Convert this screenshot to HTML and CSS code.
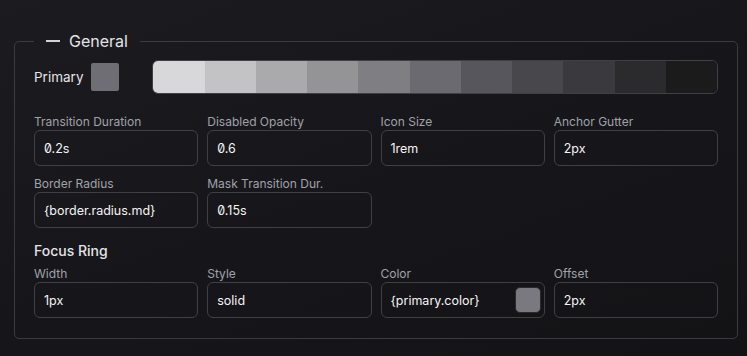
FILE: index.html
```html
<!DOCTYPE html>
<html lang="en">
<head>
<meta charset="utf-8">
<title>General</title>
<link rel="stylesheet" href="styles.css">
</head>
<body>
<fieldset class="panel">
  <legend class="legend"><span class="dash"></span><span>General</span></legend>

  <div class="primary-row">
    <span class="primary-label">Primary</span>
    <span class="primary-swatch"></span>
    <div class="palette">
      <span class="shade s50"></span>
      <span class="shade s100"></span>
      <span class="shade s200"></span>
      <span class="shade s300"></span>
      <span class="shade s400"></span>
      <span class="shade s500"></span>
      <span class="shade s600"></span>
      <span class="shade s700"></span>
      <span class="shade s800"></span>
      <span class="shade s900"></span>
      <span class="shade s950"></span>
    </div>
  </div>

  <div class="grid first">
    <label class="field"><span class="label">Transition Duration</span><span class="input">0.2s</span></label>
    <label class="field"><span class="label">Disabled Opacity</span><span class="input">0.6</span></label>
    <label class="field"><span class="label">Icon Size</span><span class="input">1rem</span></label>
    <label class="field"><span class="label">Anchor Gutter</span><span class="input">2px</span></label>
    <label class="field"><span class="label">Border Radius</span><span class="input">{border.radius.md}</span></label>
    <label class="field"><span class="label">Mask Transition Dur.</span><span class="input">0.15s</span></label>
  </div>

  <h3 class="section">Focus Ring</h3>
  <div class="grid">
    <label class="field"><span class="label">Width</span><span class="input">1px</span></label>
    <label class="field"><span class="label">Style</span><span class="input">solid</span></label>
    <label class="field"><span class="label">Color</span><span class="input with-swatch"><span>{primary.color}</span><span class="mini-swatch"></span></span></label>
    <label class="field"><span class="label">Offset</span><span class="input">2px</span></label>
  </div>
</fieldset>
</body>
</html>
```
FILE: styles.css
```css
* { box-sizing: border-box; }
html, body { height: 100%; }
body {
  margin: 0;
  background: linear-gradient(160deg, #1c1c20 0%, #17171b 45%, #131316 100%);
  font-family: Inter, "Noto Sans", sans-serif;
  font-feature-settings: "zero" 1;
  color: #e4e4e7;
  padding: 30px 9px 0 14px;
}
.panel {
  margin: 0;
  border: 1px solid #3a3a40;
  border-radius: 5px;
  padding: 8px 19px 20px 19px;
  min-width: 0;
}
.legend {
  margin-left: 0;
  padding: 0 12px;
  display: flex;
  align-items: center;
  gap: 9px;
  font-size: 16px;
  line-height: 22px;
  font-weight: 400;
  color: #e4e4e7;
}
.dash {
  display: inline-block;
  width: 14px;
  height: 2px;
  background: #d4d4d8;
}
.primary-row {
  display: flex;
  align-items: center;
  height: 34px;
}
.primary-label {
  font-size: 13.5px;
  color: #e4e4e7;
  margin-right: 8px;
}
.primary-swatch {
  width: 28px;
  height: 28px;
  border-radius: 2px;
  background: #6f6e75;
  margin-right: 33px;
}
.palette {
  flex: 1;
  height: 34px;
  display: flex;
  border: 1px solid #3f3f46;
  border-radius: 6px;
  overflow: hidden;
}
.shade { flex: 1; }
.s50 { background: #d8d8db; }
.s100 { background: #c3c3c5; }
.s200 { background: #aaaaac; }
.s300 { background: #949497; }
.s400 { background: #7f7e83; }
.s500 { background: #6b6a70; }
.s600 { background: #57565c; }
.s700 { background: #48474c; }
.s800 { background: #3a393e; }
.s900 { background: #2b2b2e; }
.s950 { background: #1b1b1c; }

.grid {
  display: grid;
  grid-template-columns: repeat(4, 1fr);
  column-gap: 9px;
  row-gap: 10px;
}
.grid.first { margin-top: 20px; }
.field { display: flex; flex-direction: column; }
.label {
  font-size: 12px;
  line-height: 16px;
  color: #a1a1aa;
}
.input {
  height: 36px;
  border: 1px solid #3f3f46;
  border-radius: 6px;
  background: transparent;
  padding: 0 9px;
  display: flex;
  align-items: center;
  font-size: 12.5px;
  color: #f4f4f5;
}
.with-swatch { justify-content: space-between; padding-right: 3px; }
.mini-swatch {
  width: 26px;
  height: 26px;
  border-radius: 5px;
  background: #7a797f;
  border: 1px solid #2a2a2e;
}
.section {
  margin: 13px 0 5px;
  font-size: 14px;
  line-height: 20px;
  font-weight: 500;
  color: #e4e4e7;
}
```
